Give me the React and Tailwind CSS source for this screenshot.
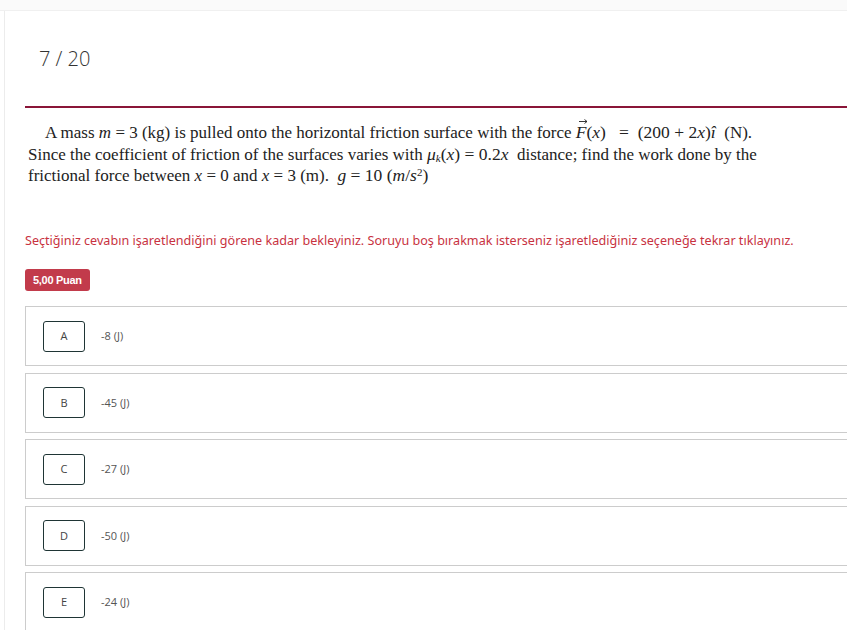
export default function App() {
  const options = [
    { key: 'A', text: '-8 (J)' },
    { key: 'B', text: '-45 (J)' },
    { key: 'C', text: '-27 (J)' },
    { key: 'D', text: '-50 (J)' },
    { key: 'E', text: '-24 (J)' },
  ];

  return (
    <div className="w-[847px] h-[630px] overflow-hidden bg-white relative">
      {/* top strip */}
      <div className="h-[11px] bg-[#fafafa] border-b border-[#f0f0f0]"></div>
      <div className="ml-[4px] border-l border-[#ececec] h-[619px] pl-[20px]">
        <div className="pt-[33px] pl-[14px] h-[95px] text-[20px] text-[#333] font-light" style={{ fontFamily: '"Open Sans", sans-serif' }}>
          7 / 20
        </div>
        <div className="h-[2px] bg-[#8a1538] w-[900px]"></div>

        <div className="pt-[14px] pl-[3px] text-[17px] leading-[21.5px] text-[#222] whitespace-nowrap" style={{ fontFamily: '"Liberation Serif", serif' }}>
          <p>
            <span className="pl-[17px]">A mass <i>m</i> = 3 (kg) is pulled onto the horizontal friction surface with the force </span>
            <span className="text-[17.5px]">
              <span className="relative inline-block">
                <i>F</i>
                <svg className="absolute left-[3px] -top-[3px]" width="9" height="5" viewBox="0 0 9 5">
                  <path d="M0 2.5 H8 M5.5 0.5 L8 2.5 L5.5 4.5" stroke="#222" strokeWidth="0.9" fill="none" />
                </svg>
              </span>
              (<i>x</i>)&nbsp;&nbsp; = &nbsp;(200 + 2<i>x</i>)<i>î</i>&nbsp;
            </span>{' '}
            (N).
            <br />
            Since the coefficient of friction of the surfaces varies with{' '}
            <span className="text-[17.5px]">
              <i>μ</i><sub className="text-[11px]"><i>k</i></sub>(<i>x</i>) = 0.2<i>x</i>
            </span>
            &nbsp; distance; find the work done by the
            <br />
            frictional force between <i>x</i> = 0 and <i>x</i> = 3 (m).&nbsp;{' '}
            <span className="text-[17.5px]">
              <i>g</i> = 10 (<i>m</i>/<i>s</i><sup className="text-[11px]">2</sup>)
            </span>
          </p>
        </div>

        <div className="mt-[45px] text-[12.6px] text-[#c8323f]" style={{ fontFamily: '"Noto Sans", sans-serif' }}>
          Seçtiğiniz cevabın işaretlendiğini görene kadar bekleyiniz. Soruyu boş bırakmak isterseniz işaretlediğiniz seçeneğe tekrar tıklayınız.
        </div>

        <div className="mt-[19px] inline-flex items-center h-[22px] px-[8px] rounded-[3px] bg-[#c23b4b] text-white text-[11px] font-bold tracking-[-0.3px]" style={{ fontFamily: '"Liberation Sans", sans-serif' }}>
          5,00 Puan
        </div>

        <div className="mt-[15px] flex flex-col gap-[6.5px] w-[840px]" style={{ fontFamily: '"Open Sans", sans-serif' }}>
          {options.map((o) => (
            <div key={o.key} className="h-[60px] border border-[#cccccc] flex items-center pl-[17px]">
              <div className="w-[42px] h-[31px] border border-[#1f3535] rounded-[3px] flex items-center justify-center text-[11px] text-[#444]">
                {o.key}
              </div>
              <div className="ml-[16px] text-[11px] text-[#555]">{o.text}</div>
            </div>
          ))}
        </div>
      </div>
    </div>
  );
}
